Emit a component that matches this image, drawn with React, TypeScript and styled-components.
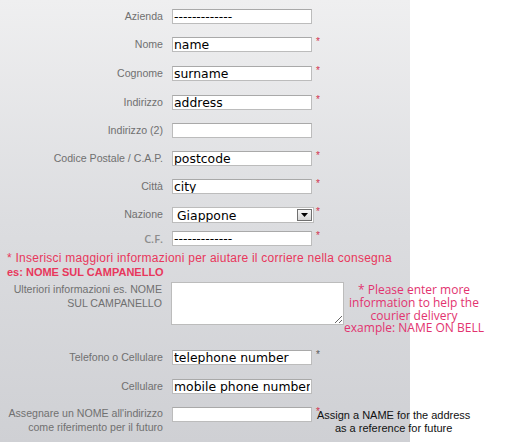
import React from "react";
import styled, { createGlobalStyle } from "styled-components";

const GlobalStyle = createGlobalStyle`
  html, body {
    margin: 0;
    padding: 0;
    background: #fff;
  }
  body {
    font-family: Arial, "Liberation Sans", sans-serif;
  }
`;

const Page = styled.div`
  width: 505px;
  height: 442px;
  overflow: hidden;
  padding-top: 9px;
  box-sizing: border-box;
  background:
    linear-gradient(to bottom, #efeff0 0%, #dcdde0 50%, #cfd0d4 100%) left top / 410px 100% no-repeat,
    #fff;
`;

const Row = styled.div<{ $h: number }>`
  display: grid;
  grid-template-columns: 172px 140px auto;
  align-items: start;
  height: ${(p) => p.$h}px;
`;

const WideRow = styled.div<{ $h: number }>`
  display: grid;
  grid-template-columns: 171px 173px 140px;
  align-items: start;
  height: ${(p) => p.$h}px;
`;

const Label = styled.label<{ $lh?: number }>`
  padding-right: 9px;
  text-align: right;
  font-size: 10.6px;
  line-height: ${(p) => p.$lh ?? 15}px;
  color: #707070;
`;

const CodeLabel = styled(Label)`
  font: 600 11px/15px "Open Sans", sans-serif;
  color: #8c8c8c;
`;

const TextInput = styled.input`
  box-sizing: border-box;
  width: 140px;
  height: 15px;
  margin: 0;
  padding: 0 1px;
  border: 1px solid #bcbcbc;
  border-top-color: #a9a9a9;
  background: #fff;
  font: 12.4px "DejaVu Sans", Verdana, sans-serif;
  color: #000;
  outline: none;
`;

const Req = styled.span<{ $tone?: "red" | "dark" }>`
  padding-left: 4px;
  font-size: 10px;
  line-height: 10px;
  color: ${(p) => (p.$tone === "dark" ? "#5a5a5a" : "#d2314d")};
`;

const SelectBox = styled.div`
  display: flex;
  align-items: center;
  box-sizing: border-box;
  width: 142px;
  height: 16px;
  border: 1px solid #bcbcbc;
  background: #fff;
`;

const Select = styled.select`
  flex: 1;
  min-width: 0;
  height: 100%;
  appearance: none;
  border: 0;
  margin: 0;
  padding: 0 0 0 4px;
  background: transparent;
  font: 12.4px "DejaVu Sans", Verdana, sans-serif;
  color: #000;
  outline: none;
`;

const ArrowButton = styled.span`
  display: flex;
  align-items: center;
  justify-content: center;
  box-sizing: border-box;
  width: 15px;
  height: 12px;
  margin-right: 1px;
  border: 1px solid #707070;
  background: linear-gradient(#f6f6f6, #d6d6d6);
`;

const RedNote = styled.p`
  margin: 3px 0 3px 7px;
  color: #e8375c;
  font-size: 12px;
  line-height: 14px;
  letter-spacing: 0.25px;
`;

const Strong = styled.span`
  font-weight: bold;
  font-size: 11px;
  letter-spacing: 0;
`;

const TextArea = styled.textarea`
  box-sizing: border-box;
  width: 173px;
  height: 43px;
  margin: 0;
  padding: 2px;
  border: 1px solid #bcbcbc;
  background: #fff;
  font: 12.4px "DejaVu Sans", Verdana, sans-serif;
  outline: none;
`;

const PinkNote = styled.p`
  margin: 0;
  padding-top: 2px;
  text-align: center;
  font: 12px/12.8px "Open Sans", sans-serif;
  color: #e2336f;
`;

const AssignCell = styled.div`
  display: flex;
  align-items: flex-start;
`;

const AssignNote = styled.p`
  margin: 0 0 0 -3px;
  padding-top: 2px;
  text-align: center;
  font-size: 11px;
  line-height: 12.5px;
  color: #111;
  white-space: nowrap;
`;

type Field = {
  label: string;
  value: string;
  required?: boolean;
  h: number;
};

const fields: Field[] = [
  { label: "Azienda", value: "-------------", h: 28 },
  { label: "Nome", value: "name", required: true, h: 29 },
  { label: "Cognome", value: "surname", required: true, h: 28.5 },
  { label: "Indirizzo", value: "address", required: true, h: 28.5 },
  { label: "Indirizzo (2)", value: "", h: 28 },
  { label: "Codice Postale / C.A.P.", value: "postcode", required: true, h: 28 },
  { label: "Città", value: "city", required: true, h: 28 },
];

const App: React.FC = () => {
  return (
    <Page>
      <GlobalStyle />
      {fields.map((f) => (
        <Row key={f.label} $h={f.h}>
          <Label>{f.label}</Label>
          <TextInput defaultValue={f.value} />
          {f.required && <Req>*</Req>}
        </Row>
      ))}
      <Row $h={24}>
        <Label>Nazione</Label>
        <SelectBox>
          <Select defaultValue="jp">
            <option value="jp">Giappone</option>
          </Select>
          <ArrowButton>
            <svg width="7" height="4" viewBox="0 0 7 4">
              <path d="M0 0h7L3.5 4z" fill="#000" />
            </svg>
          </ArrowButton>
        </SelectBox>
        <Req>*</Req>
      </Row>
      <Row $h={17}>
        <CodeLabel>C.F.</CodeLabel>
        <TextInput defaultValue="-------------" />
        <Req>*</Req>
      </Row>
      <RedNote>
        * Inserisci maggiori informazioni per aiutare il corriere nella consegna
        <br />
        <Strong>es: NOME SUL CAMPANELLO</Strong>
      </RedNote>
      <WideRow $h={68}>
        <Label $lh={14}>
          Ulteriori informazioni es. NOME
          <br />
          SUL CAMPANELLO
        </Label>
        <TextArea />
        <PinkNote>
          * Please enter more
          <br />
          information to help the
          <br />
          courier delivery
          <br />
          example: NAME ON BELL
        </PinkNote>
      </WideRow>
      <Row $h={28.5}>
        <Label>Telefono o Cellulare</Label>
        <TextInput defaultValue="telephone number" />
        <Req $tone="dark">*</Req>
      </Row>
      <Row $h={28.5}>
        <Label>Cellulare</Label>
        <TextInput defaultValue="mobile phone number" />
      </Row>
      <Row $h={36}>
        <Label $lh={13.5}>
          Assegnare un NOME all'indirizzo
          <br />
          come riferimento per il futuro
        </Label>
        <TextInput defaultValue="" />
        <AssignCell>
          <Req>*</Req>
          <AssignNote>
            Assign a NAME for the address
            <br />
            as a reference for future
          </AssignNote>
        </AssignCell>
      </Row>
    </Page>
  );
};

export default App;
